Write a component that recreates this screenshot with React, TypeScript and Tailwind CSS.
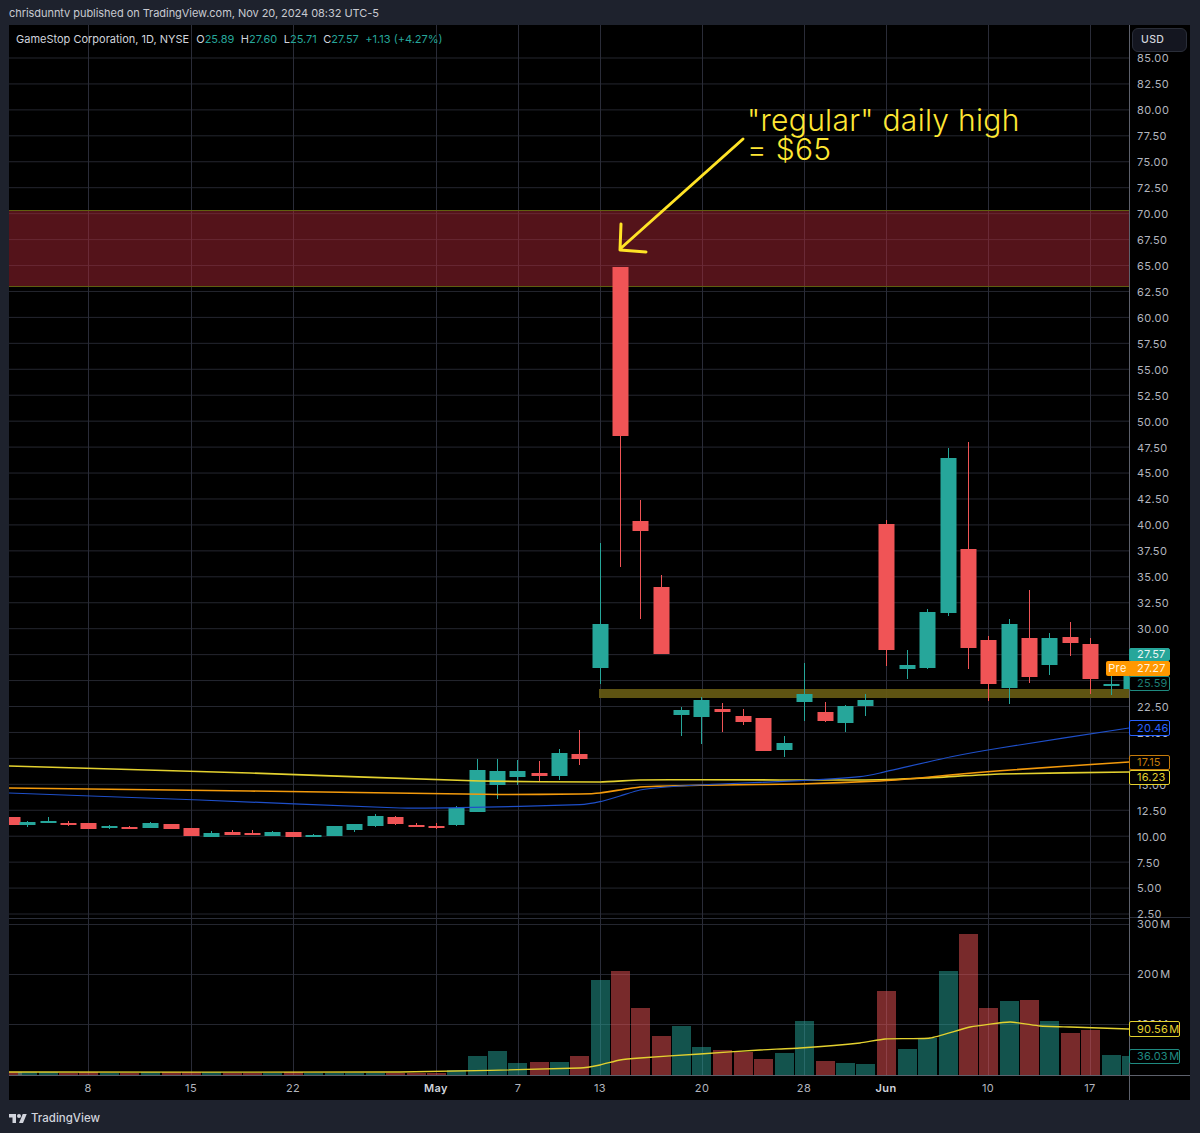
import type { ReactNode } from "react";

type Candle = [x: number, hi: number, top: number, bot: number, lo: number, up: boolean];

const candles: Candle[] = [
  [12, 817, 817, 825, 825, false],
  [27, 821, 822, 825, 827, true],
  [48, 817, 821, 822, 822, true],
  [68, 821, 823, 824, 826, false],
  [88, 823, 823, 829, 829, false],
  [109, 825, 826, 828, 829, true],
  [129, 826, 827, 828, 829, false],
  [150, 822, 823, 828, 828, true],
  [171, 824, 824, 829, 829, false],
  [191, 828, 828, 836, 836, false],
  [211, 831, 833, 837, 837, true],
  [232, 830, 832, 835, 835, false],
  [252, 830, 833, 834, 834, false],
  [272, 831, 832, 836, 836, true],
  [293, 832, 832, 837, 837, false],
  [313, 834, 835, 836, 836, true],
  [334, 826, 826, 836, 836, true],
  [354, 824, 824, 830, 832, true],
  [375, 814, 816, 826, 827, true],
  [395, 816, 817, 824, 825, false],
  [416, 823, 825, 826, 827, false],
  [436, 823, 826, 828, 829, false],
  [456, 806, 808, 825, 826, true],
  [477, 759, 770, 812, 812, true],
  [497, 759, 771, 785, 799, true],
  [517, 760, 771, 777, 785, true],
  [539, 761, 773, 776, 782, false],
  [559, 749, 753, 776, 780, true],
  [579, 730, 754, 759, 765, false],
  [600, 543, 624, 668, 684, true],
  [620, 267, 267, 436, 567, false],
  [640, 500, 521, 531, 619, false],
  [661, 575, 587, 654, 654, false],
  [681, 707, 710, 715, 736, true],
  [701, 697, 700, 717, 744, true],
  [722, 703, 709, 712, 732, false],
  [743, 709, 716, 722, 725, false],
  [763, 718, 718, 751, 751, false],
  [784, 736, 743, 750, 757, true],
  [804, 663, 694, 702, 721, true],
  [825, 702, 712, 721, 722, false],
  [845, 705, 706, 723, 732, true],
  [865, 694, 700, 706, 716, true],
  [886, 520, 524, 650, 666, false],
  [907, 650, 665, 669, 679, true],
  [927, 609, 612, 668, 669, true],
  [948, 448, 458, 613, 616, true],
  [968, 442, 549, 648, 669, false],
  [988, 636, 640, 684, 701, false],
  [1009, 619, 624, 688, 704, true],
  [1029, 590, 638, 677, 683, false],
  [1049, 633, 638, 665, 675, true],
  [1070, 622, 637, 643, 656, false],
  [1090, 638, 644, 679, 694, false],
  [1111, 676, 684, 686, 695, true],
  [1131, 670, 676, 689, 692, true],
];

const volumeTops = [
  1072, 1072, 1072, 1073, 1072, 1073, 1073, 1072, 1072, 1072, 1072, 1073, 1073, 1073, 1072, 1073, 1073, 1073, 1073, 1073,
  1073, 1073, 1070, 1056, 1051, 1063, 1062, 1062, 1056, 980, 971, 1008, 1036, 1026, 1047, 1050, 1052, 1059, 1053, 1021,
  1061, 1063, 1064, 991, 1049, 1038, 971, 934, 1008, 1001, 1000, 1021, 1033, 1030, 1055, 1056,
];

const verticals = [88, 191, 293, 436, 518, 600, 702, 804, 886, 988, 1090];
const prices = Array.from({ length: 34 }, (_, i) => (85 - i * 2.5).toFixed(2));
const priceGrid = prices.map((_, i) => 58 + i * 25.94);

const yellowLine = "9,766 250,773 480,781 600,782 640,780 700,779.7 860,780 925,778 1000,774 1129,772";
const orangeLine = "9,788 250,791 500,794.5 580,794 600,793 640,787 680,785.7 720,785 800,784 880,781 920,778 950,775 1000,770.7 1129,762";
const blueLine = "9,793 200,800 400,808 460,807.7 580,804.7 600,801.7 620,796 640,790 680,786 720,784 800,780.7 860,776.7 880,773 950,757 1000,748 1129,728";
const volumeLine = "9,1072 400,1072 580,1068 600,1065 620,1060 640,1058 700,1054 760,1050 800,1048 860,1043 885,1039 930,1038 970,1027 1010,1022 1040,1026 1070,1027 1129,1029";

// catmull-rom so the moving averages don't show corners
const smooth = (line: string) => {
  const p = line.split(" ").map((s) => s.split(",").map(Number));
  let d = `M${p[0][0]} ${p[0][1]}`;
  for (let i = 0; i < p.length - 1; i++) {
    const a = p[Math.max(i - 1, 0)];
    const b = p[i];
    const c = p[i + 1];
    const e = p[Math.min(i + 2, p.length - 1)];
    const k = (c[0] - b[0]) / 6;
    const s1 = (c[1] - a[1]) / (c[0] - a[0]);
    const s2 = (e[1] - b[1]) / (e[0] - b[0]);
    d += `C${b[0] + k} ${b[1] + s1 * k} ${c[0] - k} ${c[1] - s2 * k} ${c[0]} ${c[1]}`;
  }
  return d;
};

const ticks: [string, number, boolean][] = [
  ["8", 88, false],
  ["15", 191, false],
  ["22", 293, false],
  ["May", 436, true],
  ["7", 518, false],
  ["13", 600, false],
  ["20", 702, false],
  ["28", 804, false],
  ["Jun", 886, true],
  ["10", 988, false],
  ["17", 1090, false],
];

const ChartDrawing = () => (
  <svg width={1120} height={1050} viewBox="9 25 1120 1050" className="block">
    {priceGrid.map((y) => (
      <line key={y} x1={9} x2={1129} y1={y} y2={y} stroke="#24262f" />
    ))}
    {[924, 974, 1024].map((y) => (
      <line key={y} x1={9} x2={1129} y1={y + 0.5} y2={y + 0.5} stroke="#24262f" />
    ))}
    <line x1={9} x2={1129} y1={918.5} y2={918.5} stroke="#2a2e39" />
    {verticals.map((x) => (
      <line key={x} x1={x + 0.5} x2={x + 0.5} y1={25} y2={1075} stroke="#2a2c38" />
    ))}

    <rect x={9} y={211} width={1120} height={75.5} fill="#b22837" fillOpacity={0.47} />
    <line x1={9} x2={1129} y1={210.5} y2={210.5} stroke="#5f5e10" />
    <line x1={9} x2={1129} y1={286.5} y2={286.5} stroke="#5f5e10" />
    <rect x={599} y={689} width={530} height={9} fill="#665a14" fillOpacity={0.92} />

    {candles.map(([x, hi, top, bot, lo, up]) => (
      <g key={x} fill={up ? "#26a69a" : "#f05456"}>
        <rect x={x} y={hi} width={1} height={lo - hi} />
        <rect x={x - 7.5} y={top} width={16} height={Math.max(bot - top, 2)} />
      </g>
    ))}

    {candles.map(([x, , , , , up], i) => (
      <rect
        key={x}
        x={x - 9}
        y={volumeTops[i]}
        width={19}
        height={1075 - volumeTops[i]}
        fill={up ? "#26a69a" : "#f05456"}
        fillOpacity={0.5}
      />
    ))}

    <path d={smooth(yellowLine)} fill="none" stroke="#e3d12f" strokeWidth={1.6} />
    <path d={smooth(orangeLine)} fill="none" stroke="#f39a0c" strokeWidth={1.6} />
    <path d={smooth(blueLine)} fill="none" stroke="#1e4fc9" strokeWidth={1.2} />
    <path d={smooth(volumeLine)} fill="none" stroke="#e3d12f" strokeWidth={1.3} />

    <path
      d="M743 139L620 249M621 224L620 250L646 252"
      fill="none"
      stroke="#ffe326"
      strokeWidth={3}
      strokeLinecap="round"
      strokeLinejoin="round"
    />
  </svg>
);

const Tag = ({ className, children }: { className: string; children: ReactNode }) => (
  <div className={`flex w-[41px] items-center rounded-[2px] border pl-[7px] text-[11px] tracking-[0.2px] ${className}`}>
    {children}
  </div>
);

const VolumeTag = ({ className, children }: { className: string; children: ReactNode }) => (
  <div className={`flex w-[51px] items-center whitespace-nowrap rounded-[2px] border pl-[7px] text-[11px] tracking-[0.2px] [word-spacing:-2px] ${className}`}>
    {children}
  </div>
);

export default function App() {
  return (
    <div className="h-[1133px] w-[1200px] overflow-hidden bg-[#1e222d] font-['Inter','Liberation_Sans',sans-serif]">
      <div className="flex h-[25px] items-center pl-[9px] pt-px text-[11px] tracking-[-0.05px] text-[#c8cad1]">
        chrisdunntv published on TradingView.com, Nov 20, 2024 08:32 UTC-5
      </div>

      <div className="ml-[9px] grid h-[1075px] w-[1181px] grid-cols-[1120px_61px] grid-rows-[1050px_25px] bg-black">
        <div className="relative">
          <ChartDrawing />

          <div className="absolute left-[7px] top-[7px] flex gap-[7px] whitespace-nowrap text-[11px] leading-[14px] text-[#d1d4dc]">
            <span>GameStop Corporation, 1D, NYSE</span>
            <span className="flex gap-[6.5px]">
              <span>O<span className="text-[#26a69a]">25.89</span></span>
              <span>H<span className="text-[#26a69a]">27.60</span></span>
              <span>L<span className="text-[#26a69a]">25.71</span></span>
              <span>C<span className="text-[#26a69a]">27.57</span></span>
              <span className="text-[#26a69a]">+1.13 (+4.27%)</span>
            </span>
          </div>

          {/* drawn annotation */}
          <div className="absolute left-[738px] top-[81px] text-[30px] font-light leading-[29px] tracking-[0.3px] text-[#ffe733]">
            <div>"regular" daily high</div>
            <div>= $65</div>
          </div>
        </div>

        {/* price scale */}
        <div className="relative flex flex-col border-l border-[#5d606b] text-[11px] tracking-[0.4px] text-[#b2b5be]">
          <div className="flex h-[893px] flex-col border-b border-[#2a2e39] pl-[7px] pt-[21px]">
            {prices.map((p) => (
              <div key={p} className="flex h-[25.94px] shrink-0 items-center leading-none">
                {p}
              </div>
            ))}
          </div>
          <div className="relative -mt-px flex flex-col gap-[36px] pl-[7px] leading-[14px] [word-spacing:-2px]">
            <span>300 M</span>
            <span>200 M</span>
            <span>100 M</span>
          </div>

          <div className="absolute left-[2px] top-[3px] flex h-[24px] w-[55px] items-center rounded-[6px] border border-[#2a2e39] bg-[#141620] pl-[8px] text-[10.5px] font-medium text-[#d1d4dc]">
            USD
          </div>

          {/* last value tags */}
          <div className="absolute -left-px top-0 flex flex-col items-start pt-[623px]">
            <Tag className="h-[13px] border-[#26a69a] bg-[#26a69a] text-[#e8f5f3]">27.57</Tag>
            <div className="-ml-[23px] flex">
              <div className="flex h-[15px] w-[23px] items-center justify-center rounded-l-[2px] bg-[#ff9800] text-[11px] text-[#fff3dd]">
                Pre
              </div>
              <Tag className="h-[15px] rounded-l-none border-[#ff9800] bg-[#ff9800] text-[#fff3dd]">27.27</Tag>
            </div>
            <Tag className="h-[15px] border-[#1f8a80] bg-black text-[#1c7d74]">25.59</Tag>
            <Tag className="mt-[29px] h-[16px] border-[#2962ff] bg-black text-[#2962ff]">20.46</Tag>
            <Tag className="mt-[19px] h-[15px] border-[#c47a0a] bg-black text-[#c47a0a]">17.15</Tag>
            <Tag className="h-[15px] border-[#e3d12f] bg-black text-[#e3d12f]">16.23</Tag>
            <VolumeTag className="mt-[236px] h-[16px] border-[#e3d12f] bg-black text-[#e3d12f]">90.56 M</VolumeTag>
            <VolumeTag className="mt-[12px] h-[15px] border-[#1f8a80] bg-black text-[#1f8a80]">36.03 M</VolumeTag>
          </div>
        </div>

        {/* time scale */}
        <div className="flex items-center border-t border-[#5d606b]">
          {ticks.map(([label, x, bold], i) => (
            <div
              key={label}
              className="flex w-0 justify-center"
              style={{ marginLeft: x - (i ? ticks[i - 1][1] : 9) }}
            >
              <span className={`text-[11px] tracking-[0.4px] ${bold ? "font-semibold text-[#d1d4dc]" : "text-[#b2b5be]"}`}>
                {label}
              </span>
            </div>
          ))}
        </div>
        <div className="border-l border-t border-[#5d606b]" />
      </div>

      <div className="flex items-center gap-[4px] pl-[9px] pt-[10px]">
        <svg viewBox="0 0 36 28" width={18} height={14} fill="#d1d4dc">
          <path d="M14 22H7V11H0V4h14v18zM28 22h-8l7.5-18h8L28 22z" />
          <circle cx="20" cy="8" r="4" />
        </svg>
        <span className="text-[11.5px] font-medium text-[#d1d4dc]">TradingView</span>
      </div>
    </div>
  );
}
